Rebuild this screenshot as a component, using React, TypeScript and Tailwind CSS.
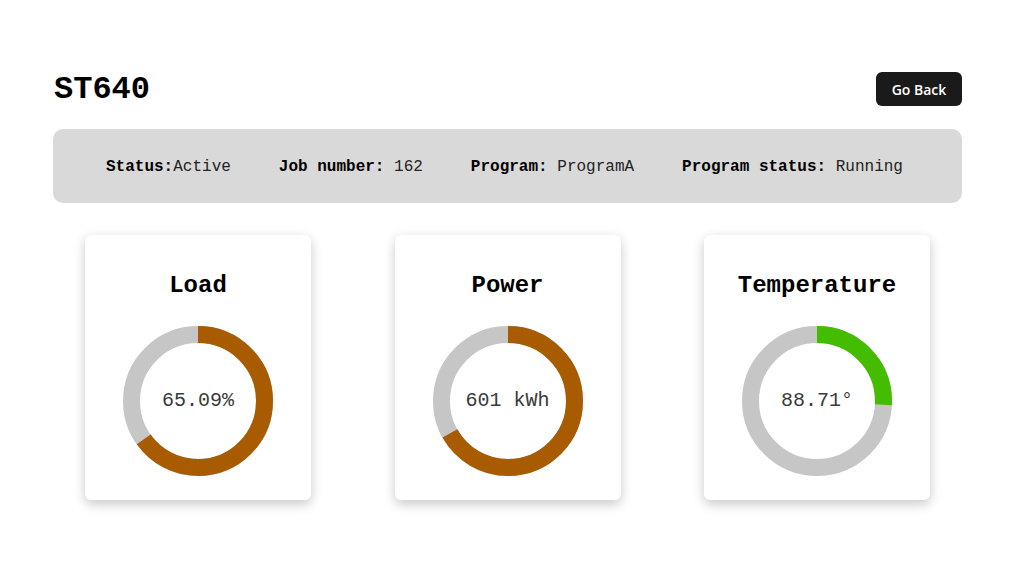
const mono = "font-['Liberation_Mono','Courier_New',monospace]";

type Gauge = { title: string; label: string; fraction: number; color: string };

const gauges: Gauge[] = [
  { title: "Load", label: "65.09%", fraction: 0.6509, color: "#a95b00" },
  { title: "Power", label: "601 kWh", fraction: 601 / 900, color: "#a95b00" },
  { title: "Temperature", label: "88.71°", fraction: 0.259, color: "#44bd00" },
];

function Donut({ fraction, color, label }: { fraction: number; color: string; label: string }) {
  const r = 66.5;
  const c = 2 * Math.PI * r;
  return (
    <div className="relative w-[150px] h-[150px]">
      <svg width="150" height="150" viewBox="0 0 150 150">
        <circle cx="75" cy="75" r={r} fill="none" stroke="#c6c6c6" strokeWidth="17" />
        <circle
          cx="75"
          cy="75"
          r={r}
          fill="none"
          stroke={color}
          strokeWidth="17"
          strokeDasharray={`${c * fraction} ${c}`}
          transform="rotate(-90 75 75)"
        />
      </svg>
      <div className={`absolute inset-0 flex items-center justify-center text-[20px] text-[#3a3a3a] ${mono}`}>
        {label}
      </div>
    </div>
  );
}

function Card({ g }: { g: Gauge }) {
  return (
    <div className="w-[226px] bg-white rounded-md shadow-[0_4px_12px_rgba(0,0,0,0.22)] flex flex-col items-center pt-[35px] pb-[24px]">
      <h2 className={`text-[24px] leading-[32px] font-bold text-black ${mono}`}>{g.title}</h2>
      <div className="mt-[24px]">
        <Donut fraction={g.fraction} color={g.color} label={g.label} />
      </div>
    </div>
  );
}

export default function App() {
  return (
    <div className="w-[1036px] h-[588px] bg-white">
      <div className="ml-[53px] w-[909px] pt-[72px]">
        <div className="flex items-center justify-between h-[34px]">
          <h1 className={`text-[32px] font-bold text-black leading-none pl-px pt-[2px] ${mono}`}>ST640</h1>
          <button className="h-[34px] w-[86px] rounded-md bg-[#1a1a1a] text-white text-[14px] font-semibold font-['Open_Sans',sans-serif]">
            Go Back
          </button>
        </div>
        <div className={`mt-[23px] h-[74px] rounded-[10px] bg-[#d9d9d9] flex items-center gap-12 pl-[53px] pt-[2px] text-[16px] text-[#222] ${mono}`}>
          <span><b className="text-black">Status:</b>Active</span>
          <span><b className="text-black">Job number:</b> 162</span>
          <span><b className="text-black">Program:</b> ProgramA</span>
          <span><b className="text-black">Program status:</b> Running</span>
        </div>
        <div className="mt-[32px] px-8 flex justify-between">
          {gauges.map((g) => (
            <Card key={g.title} g={g} />
          ))}
        </div>
      </div>
    </div>
  );
}
